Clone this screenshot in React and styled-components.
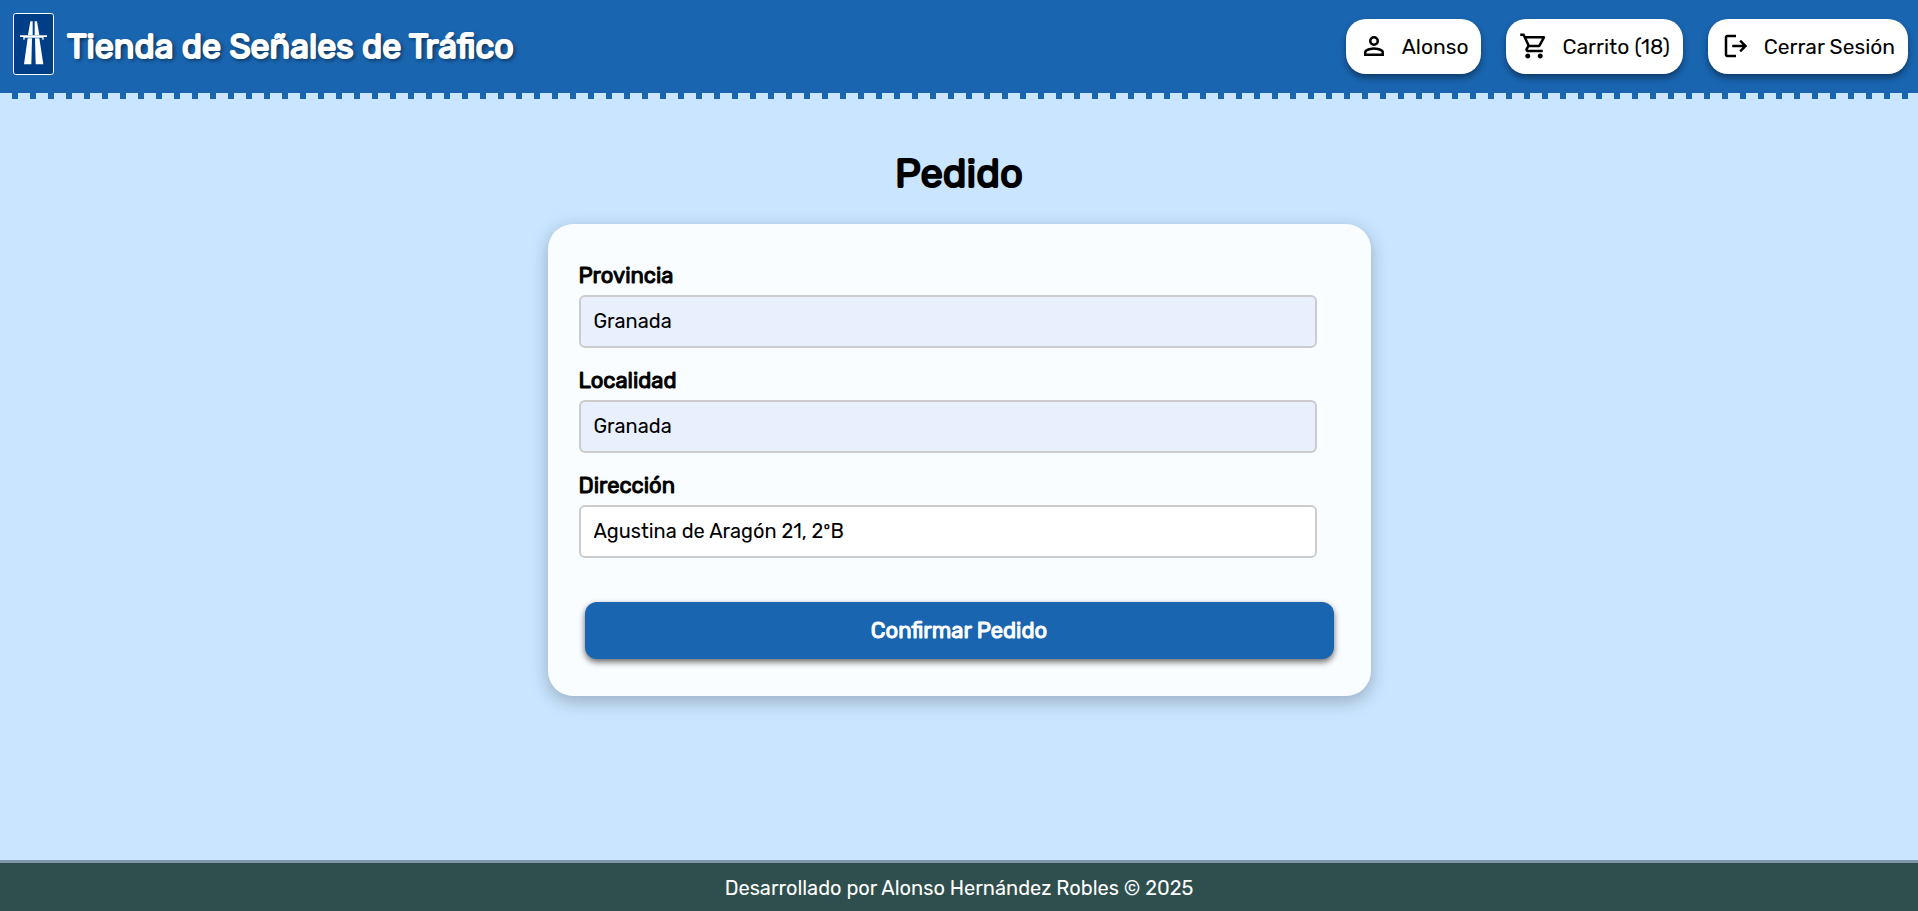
import React from "react";
import styled, { createGlobalStyle, css } from "styled-components";

const GlobalStyle = createGlobalStyle`
  *, *::before, *::after { box-sizing: border-box; }
  body {
    margin: 0;
    background: #c9e5ff;
    color: #000;
    font-family: Rubik, Inter, "Liberation Sans", sans-serif;
  }
`;

const heavyText = css`
  font-weight: 400;
  -webkit-text-stroke: ${({ $stroke = 1 }) => $stroke}px currentColor;
`;

const Page = styled.div`
  display: flex;
  flex-direction: column;
  min-height: 100vh;
`;

const Header = styled.header`
  background: #1965b0;
`;

const HeaderBar = styled.div`
  display: flex;
  align-items: center;
  justify-content: space-between;
  height: 93px;
  padding: 0 10px 0 13px;
`;

const DashedEdge = styled.div`
  height: 6px;
  background: repeating-linear-gradient(to right, #c9e5ff 0 12px, #1965b0 12px 18px);
`;

const Brand = styled.a`
  display: flex;
  align-items: center;
  gap: 13px;
  color: #fff;
  text-decoration: none;
`;

const Logo = styled.svg`
  display: block;
  width: 41px;
  height: 62px;
  margin-bottom: 5px;
`;

const BrandName = styled.span`
  ${heavyText}
  font-size: 34px;
  line-height: 40px;
  white-space: nowrap;
  text-shadow: 2px 2px 4px rgba(0, 0, 0, 0.7);
`;

const Nav = styled.nav`
  display: flex;
  gap: 25px;
`;

const NavButton = styled.button`
  display: flex;
  align-items: center;
  gap: 13px;
  height: 55px;
  padding: 0 13px;
  border: 0;
  border-radius: 20px;
  background: #fff;
  color: #000;
  font-family: inherit;
  font-size: 21px;
  line-height: 24px;
  white-space: nowrap;
  cursor: pointer;
  box-shadow: 0 4px 6px rgba(0, 0, 0, 0.4);

  svg {
    width: 30px;
    height: 30px;
    margin-bottom: 1px;
    fill: currentColor;
  }
`;

const Main = styled.main`
  display: flex;
  flex: 1;
  flex-direction: column;
  align-items: center;
  padding: 50px 16px;
`;

const Title = styled.h1`
  ${heavyText}
  margin: 0 0 25px;
  font-size: 40px;
  line-height: 50px;
`;

const Card = styled.form`
  width: 100%;
  max-width: 823px;
  padding: 37px 31px;
  border-radius: 25px;
  background: #fafdff;
  box-shadow: 0 5px 18px rgba(0, 0, 0, 0.25);
`;

const Field = styled.div`
  margin-bottom: 18px;
`;

const Label = styled.label`
  ${heavyText}
  display: block;
  margin-bottom: 4px;
  font-size: 22px;
  line-height: 30px;
`;

const Input = styled.input`
  display: block;
  width: 97%;
  height: 53px;
  padding: 0 13px 2px;
  border: 2px solid #ccc;
  border-radius: 6px;
  background: ${({ $filled }) => ($filled ? "#e8f0fe" : "#fff")};
  color: #000;
  font-family: inherit;
  font-size: 20px;
`;

const SubmitButton = styled.button`
  ${heavyText}
  display: block;
  width: calc(100% - 12px);
  height: 57px;
  margin: 44px auto 0;
  border: 0;
  border-radius: 12px;
  background: #1965b0;
  color: #fff;
  font-family: inherit;
  font-size: 22px;
  cursor: pointer;
  box-shadow: 0 3px 6px rgba(0, 0, 0, 0.6);
`;

const Footer = styled.footer`
  padding: 13px 16px 11px;
  border-top: 3px solid #8296a9;
  background: #2f4f4f;
  color: #fff;
  font-size: 20px;
  line-height: 24px;
  text-align: center;
`;

const ICONS = {
  person:
    "M480-480q-66 0-113-47t-47-113q0-66 47-113t113-47q66 0 113 47t47 113q0 66-47 113t-113 47ZM160-160v-112q0-34 17.5-62.5T224-378q62-31 126-46.5T480-440q66 0 130 15.5T736-378q29 15 46.5 43.5T800-272v112H160Zm80-80h480v-32q0-11-5.5-20T700-306q-54-27-109-40.5T480-360q-56 0-111 13.5T260-306q-9 5-14.5 14t-5.5 20v32Zm240-320q33 0 56.5-23.5T560-640q0-33-23.5-56.5T480-720q-33 0-56.5 23.5T400-640q0 33 23.5 56.5T480-560Z",
  cart:
    "M280-80q-33 0-56.5-23.5T200-160q0-33 23.5-56.5T280-240q33 0 56.5 23.5T360-160q0 33-23.5 56.5T280-80Zm400 0q-33 0-56.5-23.5T600-160q0-33 23.5-56.5T680-240q33 0 56.5 23.5T760-160q0 33-23.5 56.5T680-80ZM246-720l96 200h280l110-200H246Zm-38-80h590q23 0 35 20.5t1 41.5L692-482q-11 20-29.5 31T622-440H324l-44 80h480v80H280q-45 0-68-39.5t-2-78.5l54-98-144-304H40v-80h130l38 80Z",
  logout:
    "M200-120q-33 0-56.5-23.5T120-200v-560q0-33 23.5-56.5T200-840h280v80H200v560h280v80H200Zm440-160-55-58 102-102H360v-80h327L585-622l55-58 200 200-200 200Z",
};

const NAV_ITEMS = [
  { icon: "person", text: "Alonso" },
  { icon: "cart", text: "Carrito (18)" },
  { icon: "logout", text: "Cerrar Sesión" },
];

const FIELDS = [
  { id: "provincia", label: "Provincia", value: "Granada", filled: true },
  { id: "localidad", label: "Localidad", value: "Granada", filled: true },
  { id: "direccion", label: "Dirección", value: "Agustina de Aragón 21, 2ºB", filled: false },
];

export default function App() {
  return (
    <Page>
      <GlobalStyle />
      <Header>
        <HeaderBar>
          <Brand href="#">
            <Logo viewBox="0 0 123 186" aria-hidden="true">
              <rect x="1.5" y="1.5" width="120" height="183" rx="7" fill="#003f87" stroke="#fff" strokeWidth="3" />
              <g fill="#fff">
                <path d="M52 25h7v41H45zM65 25h7l7 41H65z" />
                <path d="M21 67h81v5H92v8h-4v-6H35v6h-4v-8H21z" />
                <path d="M44 76h13l-2 78H33zM66 76h13l12 78H68z" />
              </g>
            </Logo>
            <BrandName $stroke={2}>Tienda de Señales de Tráfico</BrandName>
          </Brand>
          <Nav>
            {NAV_ITEMS.map(({ icon, text }) => (
              <NavButton key={icon} type="button">
                <svg viewBox="0 -960 960 960" aria-hidden="true">
                  <path d={ICONS[icon]} />
                </svg>
                {text}
              </NavButton>
            ))}
          </Nav>
        </HeaderBar>
        <DashedEdge />
      </Header>
      <Main>
        <Title $stroke={2}>Pedido</Title>
        <Card onSubmit={(event) => event.preventDefault()}>
          {FIELDS.map(({ id, label, value, filled }) => (
            <Field key={id}>
              <Label htmlFor={id}>{label}</Label>
              <Input id={id} type="text" defaultValue={value} $filled={filled} />
            </Field>
          ))}
          <SubmitButton type="submit">Confirmar Pedido</SubmitButton>
        </Card>
      </Main>
      <Footer>Desarrollado por Alonso Hernández Robles © 2025</Footer>
    </Page>
  );
}
